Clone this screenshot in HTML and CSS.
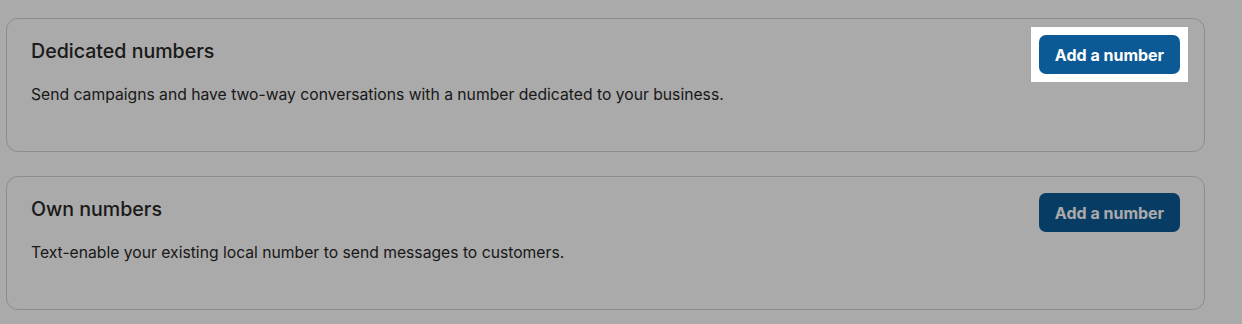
FILE: index.html
```html
<!DOCTYPE html>
<html>
<head>
<meta charset="utf-8">
<link rel="stylesheet" href="styles.css">
</head>
<body>
<div class="page">
  <section class="card">
    <div class="card-text">
      <h2 class="card-title">Dedicated numbers</h2>
      <p class="card-desc">Send campaigns and have two-way conversations with a number dedicated to your business.</p>
    </div>
    <div class="spotlight">
      <button class="btn">Add a number</button>
    </div>
  </section>
  <section class="card">
    <div class="card-text">
      <h2 class="card-title">Own numbers</h2>
      <p class="card-desc">Text-enable your existing local number to send messages to customers.</p>
    </div>
    <div class="btn-wrap">
      <button class="btn">Add a number</button>
    </div>
  </section>
</div>
</body>
</html>
```
FILE: styles.css
```css
* { box-sizing: border-box; }
html, body { margin: 0; padding: 0; }
body {
  background: #ffffff;
  font-family: Inter, "Noto Sans", sans-serif;
  color: #282828;
  width: 1242px;
  height: 324px;
  overflow: hidden;
}
.page {
  padding: 18px 37px 0 6px;
  display: flex;
  flex-direction: column;
  gap: 24px;
}
.card {
  border: 1px solid #cfd3d8;
  border-radius: 12px;
  height: 134px;
  display: flex;
  justify-content: space-between;
  align-items: flex-start;
  padding: 16px 24px 0 24px;
}
.card-text { padding-top: 2px; }
.card-title {
  margin: 0;
  font-size: 19.6px;
  font-weight: 500;
  line-height: 28px;
}
.card-desc {
  margin: 19px 0 0;
  font-size: 15.7px;
  line-height: 22px;
}
.spotlight {
  position: relative;
  z-index: 10;
  background: #ffffff;
  padding: 8px;
  margin: -8px -8px 0 0;
  box-shadow: 0 0 0 3000px rgba(0, 0, 0, 0.333);
}
.btn {
  display: block;
  width: 141px;
  height: 39px;
  border: none;
  border-radius: 7px;
  background: #0b5a96;
  color: #ffffff;
  font-family: inherit;
  font-size: 16px;
  font-weight: 700;
  padding: 0;
}
```
